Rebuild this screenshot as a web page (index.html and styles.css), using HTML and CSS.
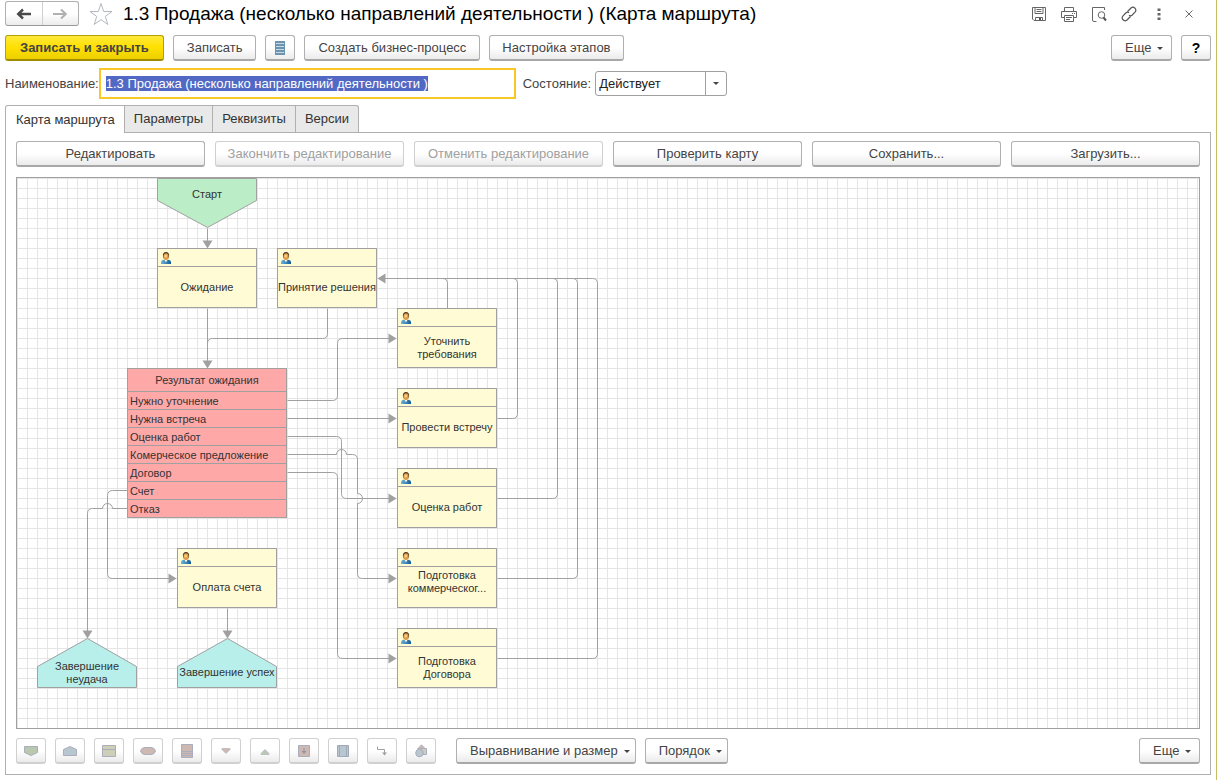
FILE: index.html
```html
<!DOCTYPE html>
<html lang="ru">
<head>
<meta charset="utf-8">
<title>1.3 Продажа (Карта маршрута)</title>
<link rel="stylesheet" href="styles.css">
</head>
<body>
<svg class="defs" aria-hidden="true">
  <defs>
    <linearGradient id="shirt" x1="0" x2="1" y1="0" y2="0"><stop offset="0" stop-color="#6db4dd"/><stop offset="1" stop-color="#0f5a94"/></linearGradient>
    <symbol id="user" viewBox="0 0 10 12">
      <path d="M0 12V10Q.2 8.300 2.500 7.700H7.500Q9.800 8.300 10 10V12Z" fill="url(#shirt)"/>
      <path d="M3.300 7.500H6.700L5 10.500Z" fill="#fbf3df"/>
      <ellipse cx="5" cy="3.600" rx="3.100" ry="3.600" fill="#4a3521"/>
      <ellipse cx="5" cy="4.600" rx="2.600" ry="3.400" fill="#e09a40"/>
      <ellipse cx="4.700" cy="4" rx="1.400" ry="1.600" fill="#f8cf88"/>
    </symbol>
  </defs>
</svg>
<div class="window">
  <header class="titlebar">
    <div class="history">
      <button type="button" aria-label="Назад"><svg width="16" height="12" viewBox="0 0 16 12"><path d="M2 6H15M7 1.500L2.200 6L7 10.500" fill="none" stroke="#4a4a4a" stroke-width="2.400"/></svg></button>
      <button type="button" aria-label="Вперед"><svg width="16" height="12" viewBox="0 0 16 12"><path d="M1 6H14M9 1.500L13.800 6L9 10.500" fill="none" stroke="#b0b0b0" stroke-width="2"/></svg></button>
    </div>
    <button type="button" class="star" aria-label="В избранное"><svg width="24" height="24" viewBox="0 0 24 24"><path d="M12 1.500L14.700 9.500H23L16.300 14.400L18.800 22.500L12 17.600L5.200 22.500L7.700 14.400L1 9.500H9.300Z" fill="#fff" stroke="#b3b8c0"/></svg></button>
    <h1>1.3 Продажа (несколько направлений деятельности ) (Карта маршрута)</h1>
    <div class="window-tools">
      <button type="button" aria-label="Сохранить"><svg width="16" height="16" viewBox="0 0 16 16"><path d="M1.500 1.500H14.500V14.500H3L1.500 13ZM4 1.500V7.500H12V1.500M5.500 3.500H10.500M5.500 5.500H10.500M4.500 14.500V11.500H11.500V14.500" fill="none" stroke="#666"/><path d="M8 12H10V14H8Z" fill="#555"/></svg></button>
      <button type="button" aria-label="Печать"><svg width="18" height="16" viewBox="0 0 18 16"><path d="M4.500 5.500V1.500H13.500V5.500M4.500 11.500H1.500V5.500H16.500V11.500H13.500M4.500 9.500H13.500V15.500H4.500ZM6 11.500H12M6 13.500H10M12 7.500H13M14 7.500H15" fill="none" stroke="#666"/></svg></button>
      <button type="button" aria-label="Просмотр"><svg width="16" height="16" viewBox="0 0 16 16"><path d="M5.500 15.500H3Q1.500 15.500 1.500 14V1.500H13.500V4" fill="none" stroke="#666"/><circle cx="10.500" cy="9" r="3.300" fill="none" stroke="#666"/><path d="M12.500 11.500L15 14.500" stroke="#555" stroke-width="2"/></svg></button>
      <button type="button" aria-label="Ссылка"><svg width="16" height="16" viewBox="0 0 16 16"><g fill="none" stroke="#555" stroke-width="1.200"><path d="M6.500 5.500L10 2Q12 .4 14 2.200Q15.700 4.200 14 6.200L11 9.200Q9.500 10.300 8 9.300"/><path d="M9.500 10.500L6 14Q4 15.600 2 13.800Q.3 11.800 2 9.800L5 6.800Q6.500 5.700 8 6.700"/></g></svg></button>
      <button type="button" aria-label="Меню"><svg width="4" height="12" viewBox="0 0 4 12"><path d="M.5 .5H3.500V3H.5ZM.5 5H3.500V7.500H.5ZM.5 9.500H3.500V12H.5Z" fill="#666"/></svg></button>
      <button type="button" aria-label="Закрыть"><svg width="8" height="8" viewBox="0 0 8 8"><path d="M.5 .5L7.500 7.500M7.500 .5L.5 7.500" stroke="#666"/></svg></button>
    </div>
  </header>

  <div class="commands">
    <button type="button" class="btn primary">Записать и закрыть</button>
    <button type="button" class="btn">Записать</button>
    <button type="button" class="btn icon" aria-label="Список"><svg width="10" height="14" viewBox="0 0 10 14"><path d="M0 0H10V14H0Z" fill="#6d93ad"/><path d="M1 2.500H9M1 5.500H9M1 8.500H9M1 11.500H9" stroke="#c3dcea"/></svg></button>
    <button type="button" class="btn">Создать бизнес-процесс</button>
    <button type="button" class="btn compact">Настройка этапов</button>
    <button type="button" class="btn menu push">Еще</button>
    <button type="button" class="btn icon help">?</button>
  </div>

  <form class="fields">
    <label for="name">Наименование:</label>
    <input id="name" type="text" value="1.3 Продажа (несколько направлений деятельности )">
    <label for="state">Состояние:</label>
    <span class="combo"><select id="state"><option>Действует</option></select></span>
  </form>

  <nav class="tabs" role="tablist">
    <button type="button" role="tab" aria-selected="true" class="tab active">Карта маршрута</button>
    <button type="button" role="tab" class="tab">Параметры</button>
    <button type="button" role="tab" class="tab">Реквизиты</button>
    <button type="button" role="tab" class="tab">Версии</button>
  </nav>

  <main class="panel">
    <div class="map-actions">
      <button type="button" class="btn">Редактировать</button>
      <button type="button" class="btn" disabled>Закончить редактирование</button>
      <button type="button" class="btn" disabled>Отменить редактирование</button>
      <button type="button" class="btn">Проверить карту</button>
      <button type="button" class="btn">Сохранить...</button>
      <button type="button" class="btn">Загрузить...</button>
    </div>

    <div class="canvas">
      <svg class="links" aria-hidden="true">
        <g transform="translate(.5 .5)">
          <g fill="none" stroke="#a0a0a0">
            <path d="M190 50V65"/>
            <path d="M190 130V185"/>
            <path d="M310 130V155Q310 160 305 160H195Q190 160 190 165"/>
            <path d="M270 222H315Q320 222 320 217V165Q320 160 325 160H375"/>
            <path d="M270 240H375"/>
            <path d="M270 258H319Q324 258 324 263V315Q324 320 329 320H375"/>
            <path d="M270 276H319A5 5 0 0 1 329 276H335Q340 276 340 281V315A5 5 0 0 1 340 325V395Q340 400 345 400H375"/>
            <path d="M270 294H315Q320 294 320 299V475Q320 480 325 480H375"/>
            <path d="M110 312H95Q90 312 90 317V395Q90 400 95 400H155"/>
            <path d="M110 330H95A5 5 0 0 0 85 330H75Q70 330 70 335V455"/>
            <path d="M210 430V455"/>
            <path d="M365 100H575Q580 100 580 105V475Q580 480 575 480H480"/>
            <path d="M425 100Q430 100 430 105V130"/>
            <path d="M495 100Q500 100 500 105V235Q500 240 495 240H480"/>
            <path d="M535 100Q540 100 540 105V315Q540 320 535 320H480"/>
            <path d="M555 100Q560 100 560 105V395Q560 400 555 400H480"/>
          </g>
          <g fill="#a0a0a0">
            <path d="M185 62H195L190 70Z"/>
            <path d="M185 182H195L190 190Z"/>
            <path d="M65 452H75L70 460Z"/>
            <path d="M205 452H215L210 460Z"/>
            <path d="M151 395V405L159 400Z"/>
            <path d="M371 155V165L379 160Z"/>
            <path d="M371 235V245L379 240Z"/>
            <path d="M371 315V325L379 320Z"/>
            <path d="M371 395V405L379 400Z"/>
            <path d="M371 475V485L379 480Z"/>
            <path d="M368 95V105L360 100Z"/>
          </g>
          <g stroke="#a0a0a0">
            <path d="M140 0H239V22L190 49L140 22Z" fill="#bbedc7"/>
            <path d="M20 509V488L70 460L119 488V509Z" fill="#b9efeb"/>
            <path d="M160 509V488L210 460L259 488V509Z" fill="#b9efeb"/>
          </g>
        </g>
      </svg>
      <div class="node label start">Старт</div>
      <div class="node label fail">Завершение неудача</div>
      <div class="node label success">Завершение успех</div>
      <div class="node task wait"><div class="role"><svg><use href="#user"/></svg></div><p>Ожидание</p></div>
      <div class="node task decide"><div class="role"><svg><use href="#user"/></svg></div><p>Принятие решения</p></div>
      <div class="node task two-line clarify"><div class="role"><svg><use href="#user"/></svg></div><p>Уточнить требования</p></div>
      <div class="node task meet"><div class="role"><svg><use href="#user"/></svg></div><p>Провести встречу</p></div>
      <div class="node task estimate"><div class="role"><svg><use href="#user"/></svg></div><p>Оценка работ</p></div>
      <div class="node task two-line offer"><div class="role"><svg><use href="#user"/></svg></div><p>Подготовка<br>коммерческог...</p></div>
      <div class="node task two-line contract"><div class="role"><svg><use href="#user"/></svg></div><p>Подготовка Договора</p></div>
      <div class="node task payment"><div class="role"><svg><use href="#user"/></svg></div><p>Оплата счета</p></div>
      <div class="node switch">
        <h2>Результат ожидания</h2>
        <ul>
          <li>Нужно уточнение</li>
          <li>Нужна встреча</li>
          <li>Оценка работ</li>
          <li>Комерческое предложение</li>
          <li>Договор</li>
          <li>Счет</li>
          <li>Отказ</li>
        </ul>
      </div>
    </div>

    <div class="shapes">
      <button type="button" class="btn icon" disabled aria-label="Старт"><svg width="16" height="12" viewBox="0 0 16 12"><path d="M1.500 1.500H14.500V7.500L8 10.500L1.500 7.500Z" fill="#b9c9b0" stroke="#a9adbd"/></svg></button>
      <button type="button" class="btn icon" disabled aria-label="Завершение"><svg width="16" height="12" viewBox="0 0 16 12"><path d="M1.500 10.500V4.500L8 1.500L14.500 4.500V10.500Z" fill="#b7c6cf" stroke="#a9adbd"/></svg></button>
      <button type="button" class="btn icon" disabled aria-label="Действие"><svg width="16" height="14" viewBox="0 0 16 14"><path d="M1.500 1.500H14.500V12.500H1.500ZM1.500 5.500H14.500" fill="#cfcfb8" stroke="#a9adbd"/></svg></button>
      <button type="button" class="btn icon" disabled aria-label="Условие"><svg width="16" height="12" viewBox="0 0 16 12"><path d="M.5 6Q1.500 2.500 5 2.500H11Q14.500 2.500 15.500 6Q14.500 9.500 11 9.500H5Q1.500 9.500 .5 6Z" fill="#ceb9b2" stroke="#a9adbd"/></svg></button>
      <button type="button" class="btn icon" disabled aria-label="Выбор варианта"><svg width="12" height="14" viewBox="0 0 12 14"><path d="M.5 .5H11.500V13.500H.5ZM.5 7.500H11.500M.5 9.500H11.500M.5 11.500H11.500" fill="#ceb9b2" stroke="#a9adbd"/></svg></button>
      <button type="button" class="btn icon" disabled aria-label="Разделение"><svg width="12" height="12" viewBox="0 0 12 12"><path d="M2 3.500H10L10 4.500L6 8.500L2 4.500Z" fill="#ceb9b2" stroke="#b3b0ba" stroke-width=".7"/></svg></button>
      <button type="button" class="btn icon" disabled aria-label="Слияние"><svg width="12" height="12" viewBox="0 0 12 12"><path d="M2 9.500H10V8.500L6 4.500L2 8.500Z" fill="#b9c9b0" stroke="#b0b5ba" stroke-width=".7"/></svg></button>
      <button type="button" class="btn icon" disabled aria-label="Обработка"><svg width="12" height="12" viewBox="0 0 12 12"><path d="M.5 .5H11.500V11.500H.5Z" fill="#ceb9b2" stroke="#a9adbd"/><path d="M6 3V7" stroke="#8d95a8"/><path d="M3.500 6H8.500L6 9Z" fill="#8d95a8"/></svg></button>
      <button type="button" class="btn icon" disabled aria-label="Вложенный процесс"><svg width="12" height="12" viewBox="0 0 12 12"><path d="M.5 .5H11.500V11.500H.5ZM2.500 .5V11.500M9.500 .5V11.500" fill="#b7c6cf" stroke="#a0a9b8"/></svg></button>
      <button type="button" class="btn icon" disabled aria-label="Линия"><svg width="12" height="12" viewBox="0 0 12 12"><path d="M1.500 1.500V4.500H8.500V9" fill="none" stroke="#a0a0a0"/><path d="M6 7.500H11L8.500 10.500Z" fill="#a0a0a0"/></svg></button>
      <button type="button" class="btn icon" disabled aria-label="Декорация"><svg width="12" height="14" viewBox="0 0 12 14"><path d="M6.500 .8L10.500 5H2.500Z" fill="#ceb9b2" stroke="#b3b0ba"/><path d="M5.500 4.500H11.500V10.500H5.500Z" fill="#cfcfb8" stroke="#a9adbd"/><circle cx="4.500" cy="9" r="3.800" fill="#b7c6cf" stroke="#a9adbd"/></svg></button>
      <button type="button" class="btn menu arrange">Выравнивание и размер</button>
      <button type="button" class="btn menu">Порядок</button>
      <button type="button" class="btn menu push">Еще</button>
    </div>
  </main>
</div>
<script src="main.js"></script>
</body>
</html>
```

FILE: styles.css
```css
* { box-sizing: border-box; }

body {
  margin: 0;
  background: #fff;
  color: #444;
  font: 13px/16px "Liberation Sans", Arial, sans-serif;
}

button, input, select { font: inherit; color: inherit; }

.defs { position: absolute; width: 0; height: 0; }

.window {
  display: flex;
  flex-direction: column;
  min-height: 100vh;
  padding: 1px 5px 5px;
  border-right: 1px solid #c9bb62;
}

/* title bar */
.titlebar { display: flex; align-items: center; height: 25px; }

.history {
  display: flex;
  width: 74px;
  height: 25px;
  border: 1px solid #b0b0b0;
  border-bottom-color: #999;
  border-radius: 3px;
  background: linear-gradient(#fff 50%, #ececec);
}
.history button {
  flex: 1;
  display: grid;
  place-items: center;
  padding: 0;
  border: 0;
  background: none;
}
.history button + button { border-left: 1px solid #d0d0d0; }

.star { display: flex; margin-left: 10px; padding: 0; border: 0; background: none; }

h1 {
  flex: 1;
  margin: 0 0 0 10px;
  color: #000;
  font-size: 19px;
  font-weight: 400;
  line-height: 24px;
  white-space: nowrap;
}

.window-tools { display: flex; margin-right: 7px; }
.window-tools button {
  display: grid;
  place-items: center;
  width: 30px;
  height: 24px;
  padding: 0;
  border: 0;
  background: none;
}

/* buttons */
.btn {
  height: 26px;
  padding: 1px 13px 0;
  border: 1px solid #b0b0b0;
  border-bottom: 2px solid #a8a8a8;
  border-radius: 3px;
  background: linear-gradient(#fff 50%, #ebebeb);
  white-space: nowrap;
}
.btn:disabled { color: #a0a0a0; border-color: #d0d0d0; }
.btn.primary {
  padding: 1px 14px 0;
  border-color: #b5a000;
  border-bottom-color: #a08c00;
  background: linear-gradient(#ffe93a, #ffe000 50%, #ecd000);
  font-weight: 700;
}
.btn.compact { padding: 1px 12px 0; }
.btn.icon { display: grid; place-items: center; width: 30px; padding: 0; }
.btn.help { color: #000; font-weight: 700; font-size: 14px; }
.btn.menu { min-width: 61px; padding: 1px 5px 0 13px; text-align: left; }
.btn.menu::after {
  content: "";
  display: inline-block;
  margin-left: 6px;
  vertical-align: 2px;
  border: 3px solid transparent;
  border-top-color: #444;
  border-bottom: 0;
}
.push { margin-left: auto; }

.commands { display: flex; gap: 9px; margin-top: 9px; }

/* fields */
.fields { display: flex; align-items: center; margin-top: 7px; }
.fields input {
  width: 417px;
  height: 31px;
  margin: 0 7px 0 0;
  padding: 0 5px;
  border: 2px solid #f9c828;
  outline: 0;
  background: #fff;
}
.fields input::selection { background: #5169c4; color: #fff; }
.combo { position: relative; width: 132px; margin-left: 4px; }
.combo select {
  display: block;
  width: 100%;
  height: 25px;
  padding: 0 3px;
  border: 1px solid #a0a0a0;
  border-radius: 3px;
  background: #fff;
  color: #222;
  appearance: none;
}
.combo::before {
  content: "";
  position: absolute;
  top: 1px;
  right: 21px;
  bottom: 1px;
  border-left: 1px solid #a0a0a0;
}
.combo::after {
  content: "";
  position: absolute;
  top: 11px;
  right: 8px;
  border: 3px solid transparent;
  border-top-color: #444;
  border-bottom: 0;
}

/* tabs */
.tabs { display: flex; margin-top: 6px; }
.tab {
  height: 27px;
  padding: 0 9px;
  border: 1px solid #b0b0b0;
  border-bottom: 0;
  border-left: 0;
  background: #e9e9e9;
  color: #333;
}
.tab.active {
  position: relative;
  height: 28px;
  margin-bottom: -1px;
  padding: 0 9px 0 10px;
  border-left: 1px solid #b0b0b0;
  border-top-left-radius: 3px;
  background: #fff;
}
.tab:last-child { border-top-right-radius: 3px; }

.panel {
  flex: 1;
  display: flex;
  flex-direction: column;
  padding: 8px 10px 10px;
  border: 1px solid #b0b0b0;
}

.map-actions { display: grid; grid-template-columns: repeat(6, 1fr); gap: 10px; }
.map-actions .btn { padding: 1px 0 0; }

/* diagram */
.canvas {
  position: relative;
  flex: 1;
  min-height: 520px;
  margin: 10px 0 9px;
  overflow: hidden;
  border: 1px solid #a0a0a0;
  background:
    linear-gradient(#e5e5e5 1px, transparent 1px) 0 0 / 10px 10px,
    linear-gradient(90deg, #e5e5e5 1px, transparent 1px) 0 0 / 10px 10px;
  color: #333;
  font-size: 11px;
  line-height: 13px;
}
.links { position: absolute; inset: 0; width: 100%; height: 100%; }

.node { position: absolute; width: 100px; text-align: center; }
.label { display: grid; place-items: center; height: 50px; }
.start { left: 140px; top: 0; padding-bottom: 18px; }
.fail { left: 20px; top: 460px; padding: 20px 15px 0; }
.success { left: 160px; top: 460px; padding-top: 18px; white-space: nowrap; }

.task {
  display: flex;
  flex-direction: column;
  height: 60px;
  border: 1px solid #a0a0a0;
  background: #fffcd5;
}
.role { height: 18px; padding: 3px 3px 0; border-bottom: 1px solid #a0a0a0; }
.role svg { display: block; width: 10px; height: 12px; }
.task p {
  flex: 1;
  display: grid;
  place-items: center;
  margin: 0;
}
.two-line p { padding-top: 2px; }
.wait { left: 140px; top: 70px; }
.decide { left: 260px; top: 70px; }
.decide p { white-space: nowrap; }
.clarify { left: 380px; top: 130px; }
.meet { left: 380px; top: 210px; }
.estimate { left: 380px; top: 290px; }
.offer { left: 380px; top: 370px; }
.offer p { place-items: start center; }
.contract { left: 380px; top: 450px; }
.payment { left: 160px; top: 370px; }

.switch {
  left: 110px;
  top: 190px;
  width: 160px;
  border: 1px solid #a0a0a0;
  background: #ffa8a8;
}
.switch h2 { margin: 0; font-size: 11px; font-weight: 400; line-height: 22px; }
.switch ul { margin: 0; padding: 0; list-style: none; text-align: left; }
.switch li { height: 18px; padding: 0 2px; border-top: 1px solid #a0a0a0; line-height: 18px; }

.shapes { display: flex; gap: 9px; }
.arrange { margin-left: 11px; }
```

FILE: main.js
```js
const nameField = document.getElementById("name");
nameField.focus();
nameField.select();
```
